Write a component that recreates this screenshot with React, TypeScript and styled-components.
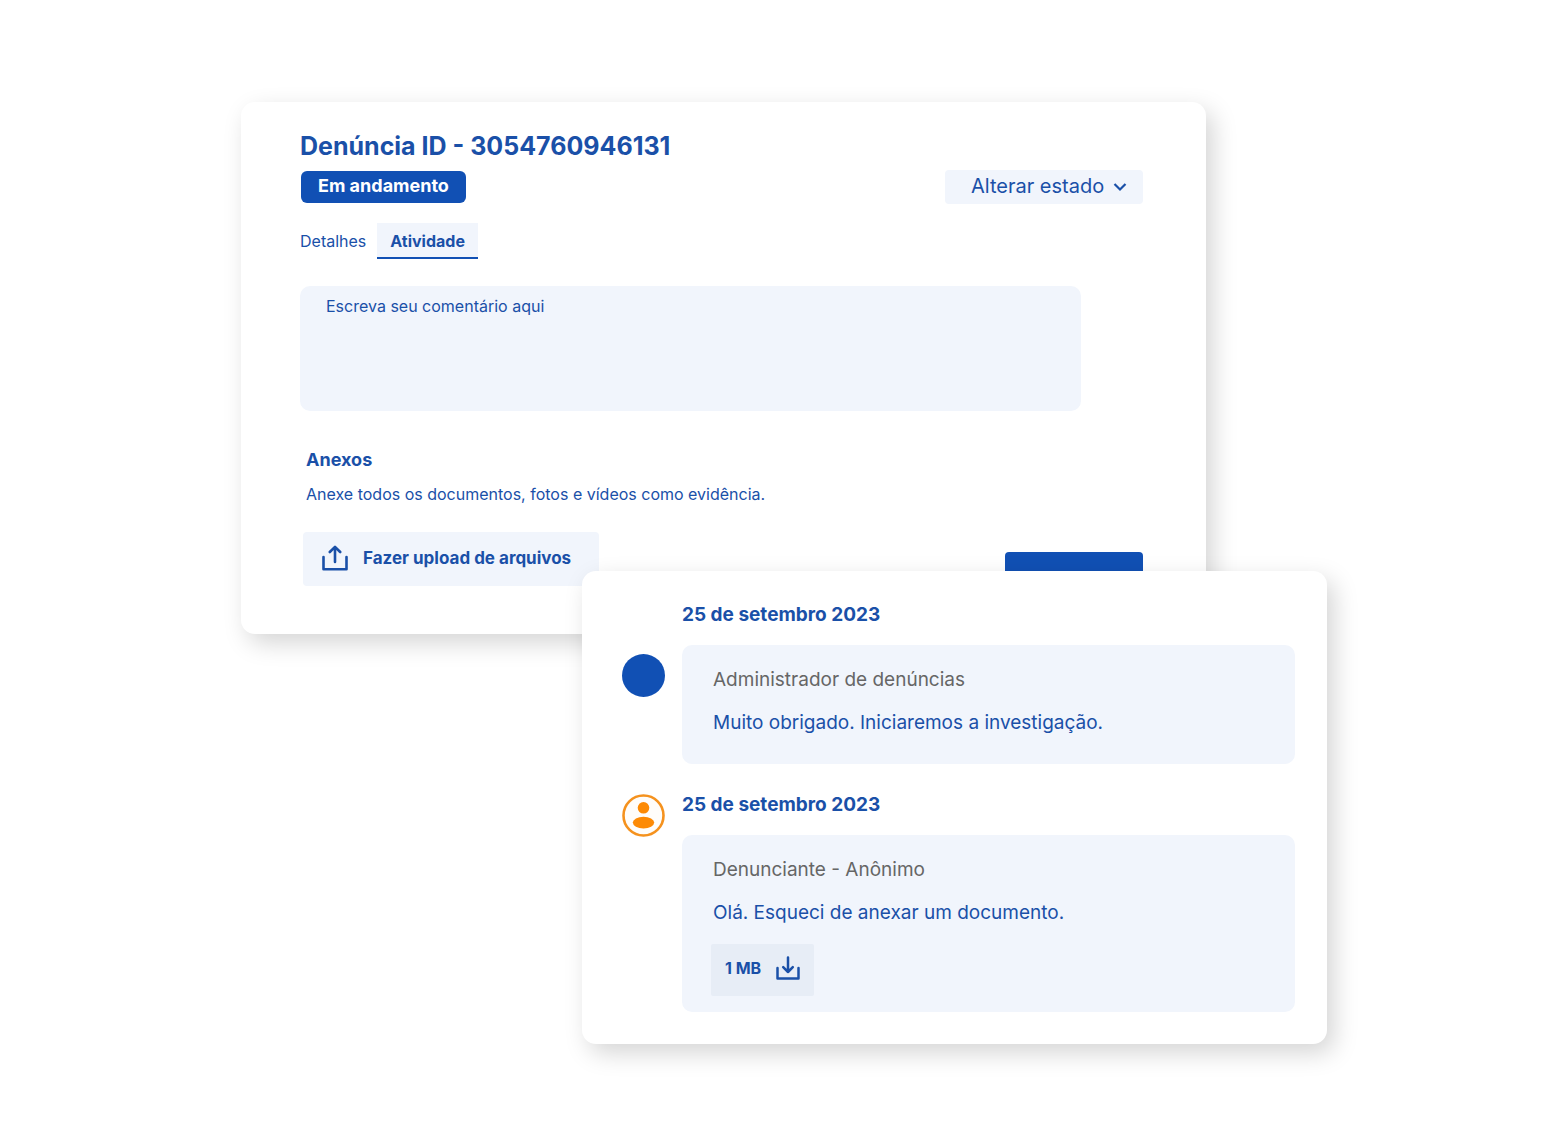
import React from "react";
import styled, { createGlobalStyle } from "styled-components";

const blue = "#1150b4";
const ink = "#1a50a8";
const mist = "#f1f5fc";

const GlobalStyle = createGlobalStyle`
  *, *::before, *::after { box-sizing: border-box; }
  body {
    margin: 0;
    background: #fff;
    color: ${ink};
    font-family: Inter, "Liberation Sans", sans-serif;
    font-size: 16px;
    line-height: 24px;
  }
  button, select, textarea { font: inherit; color: inherit; border: 0; margin: 0; }
  h1, h2, p { margin: 0; }
`;

const Page = styled.main`
  min-height: 100vh;
  display: flex;
  align-items: center;
  justify-content: center;
  padding: 32px;
`;

const Stage = styled.div`
  width: 100%;
  max-width: 1086px;
  display: flex;
  flex-direction: column;
`;

const Card = styled.section`
  background: #fff;
  border-radius: 14px;
  box-shadow: 7px 9px 24px rgba(0, 0, 0, 0.17);
`;

const ReportCard = styled(Card)`
  margin-right: 121px;
  padding: 28px 63px 28px 59px;
`;

const Title = styled.h1`
  font-size: 25px;
  line-height: 32px;
  font-weight: 700;
`;

const StatusRow = styled.div`
  display: flex;
  align-items: center;
  justify-content: space-between;
  margin-top: 8px;
`;

const Badge = styled.span`
  display: inline-flex;
  height: 32px;
  margin-left: 1px;
  padding: 0 17px 2px;
  align-items: center;
  border-radius: 6px;
  background: ${blue};
  color: #fff;
  font-size: 18px;
  font-weight: 700;
`;

const SelectWrap = styled.label`
  display: grid;
  grid-template-columns: 1fr 40px;
  align-items: center;
  width: 198px;
  height: 34px;
  border-radius: 4px;
  background: ${mist};
  svg { grid-area: 1 / 2; pointer-events: none; margin-left: 10px; }
`;

const StateSelect = styled.select`
  grid-area: 1 / 1 / 2 / 3;
  appearance: none;
  height: 34px;
  padding: 0 0 2px 26px;
  background: transparent;
  font-size: 20px;
`;

const Tabs = styled.nav`
  display: flex;
  gap: 11px;
  margin-top: 19px;
`;

const Tab = styled.button<{ $active?: boolean }>`
  height: 36px;
  padding: ${(p) => (p.$active ? "2px 13px 0" : "0")};
  background: ${(p) => (p.$active ? mist : "transparent")};
  border-bottom: ${(p) => (p.$active ? `2px solid ${blue}` : "0")};
  font-weight: ${(p) => (p.$active ? 700 : 400)};
  cursor: pointer;
`;

const Comment = styled.textarea`
  display: block;
  width: calc(100% - 62px);
  height: 125px;
  margin-top: 27px;
  padding: 8px 26px;
  border-radius: 10px;
  background: ${mist};
  resize: none;
  &::placeholder { color: ${ink}; opacity: 1; }
`;

const Attachments = styled.div`
  margin-top: 37px;
  padding-left: 6px;
`;

const Subtitle = styled.h2`
  font-size: 18px;
  line-height: 24px;
  font-weight: 700;
`;

const Hint = styled.p`
  margin-top: 10px;
`;

const Actions = styled.div`
  display: flex;
  align-items: flex-start;
  justify-content: space-between;
  margin-top: 26px;
  padding-left: 3px;
`;

const UploadButton = styled.button`
  display: flex;
  align-items: center;
  gap: 15px;
  height: 54px;
  padding: 0 28px 2px 19px;
  border-radius: 4px;
  background: ${mist};
  font-size: 17px;
  font-weight: 700;
  cursor: pointer;
`;

const SendButton = styled.button`
  width: 138px;
  height: 54px;
  margin-top: 20px;
  border-radius: 4px;
  background: ${blue};
  cursor: pointer;
`;

const ActivityCard = styled(Card)`
  position: relative;
  margin: -63px 0 0 341px;
  padding: 31px 32px 32px 40px;
  display: flex;
  flex-direction: column;
  gap: 28px;
`;

const Entry = styled.article`
  display: grid;
  grid-template-columns: 43px 1fr;
  column-gap: 17px;
`;

const AvatarSlot = styled.div<{ $drop: number }>`
  height: 43px;
  margin-top: ${(p) => p.$drop}px;
`;

const EntryDate = styled.h2`
  font-size: 19px;
  line-height: 26px;
  font-weight: 700;
`;

const Bubble = styled.div`
  margin-top: 17px;
  padding: 21px 31px 16px;
  border-radius: 10px;
  background: ${mist};
`;

const Author = styled.p`
  font-size: 19px;
  line-height: 28px;
  color: #666;
`;

const Message = styled.p`
  margin-top: 15px;
  padding-bottom: 11px;
  font-size: 19px;
  line-height: 28px;
`;

const FileButton = styled.button`
  display: flex;
  align-items: center;
  gap: 15px;
  height: 52px;
  margin: 6px 0 0 -2px;
  padding: 0 14px 4px;
  border-radius: 2px;
  background: #e7edf6;
  font-weight: 700;
  cursor: pointer;
`;

const Chevron = () => (
  <svg width="14" height="10" viewBox="0 0 14 10" fill="none" stroke={ink} strokeWidth="2.2" aria-hidden>
    <path d="M1.5 2 7 7.5 12.5 2" />
  </svg>
);

const UploadIcon = () => (
  <svg width="26" height="26" viewBox="0 0 26 26" fill="none" stroke={ink} strokeWidth="2.6" strokeLinejoin="round" strokeLinecap="round" aria-hidden>
    <path d="M1.5 12V24.3h23V12M13 17V2M7.8 7 13 1.8 18.2 7" />
  </svg>
);

const DownloadIcon = () => (
  <svg width="24" height="24" viewBox="0 0 24 24" fill="none" stroke={ink} strokeWidth="2.5" strokeLinejoin="round" strokeLinecap="round" aria-hidden>
    <path d="M1.5 12v10.5h21V12M12 1.6V16M7.2 11.2 12 16l4.8-4.8" />
  </svg>
);

const AdminAvatar = () => (
  <svg width="43" height="43" viewBox="0 0 43 43" aria-hidden>
    <circle cx="21.5" cy="21.5" r="21.5" fill={blue} />
  </svg>
);

const PersonAvatar = () => (
  <svg width="43" height="43" viewBox="0 0 43 43" aria-hidden>
    <circle cx="21.5" cy="21.5" r="20" fill="#fffdfa" stroke="#f5921e" strokeWidth="2.6" />
    <circle cx="21.5" cy="13.8" r="5.8" fill="#fd8a04" />
    <ellipse cx="21.5" cy="28.6" rx="10.7" ry="5.8" fill="#fd8a04" />
  </svg>
);

export default function App() {
  return (
    <>
      <GlobalStyle />
      <Page>
        <Stage>
          <ReportCard>
            <Title>Denúncia ID - 3054760946131</Title>
            <StatusRow>
              <Badge>Em andamento</Badge>
              <SelectWrap>
                <StateSelect aria-label="Alterar estado" defaultValue="change">
                  <option value="change">Alterar estado</option>
                </StateSelect>
                <Chevron />
              </SelectWrap>
            </StatusRow>
            <Tabs>
              <Tab type="button">Detalhes</Tab>
              <Tab type="button" $active>Atividade</Tab>
            </Tabs>
            <Comment aria-label="Comentário" placeholder="Escreva seu comentário aqui" />
            <Attachments>
              <Subtitle>Anexos</Subtitle>
              <Hint>Anexe todos os documentos, fotos e vídeos como evidência.</Hint>
            </Attachments>
            <Actions>
              <UploadButton type="button">
                <UploadIcon />
                Fazer upload de arquivos
              </UploadButton>
              <SendButton type="button" aria-label="Enviar" />
            </Actions>
          </ReportCard>
          <ActivityCard>
            <Entry>
              <AvatarSlot $drop={52}><AdminAvatar /></AvatarSlot>
              <div>
                <EntryDate>25 de setembro 2023</EntryDate>
                <Bubble>
                  <Author>Administrador de denúncias</Author>
                  <Message>Muito obrigado. Iniciaremos a investigação.</Message>
                </Bubble>
              </div>
            </Entry>
            <Entry>
              <AvatarSlot $drop={2}><PersonAvatar /></AvatarSlot>
              <div>
                <EntryDate>25 de setembro 2023</EntryDate>
                <Bubble>
                  <Author>Denunciante - Anônimo</Author>
                  <Message>Olá. Esqueci de anexar um documento.</Message>
                  <FileButton type="button">
                    1 MB
                    <DownloadIcon />
                  </FileButton>
                </Bubble>
              </div>
            </Entry>
          </ActivityCard>
        </Stage>
      </Page>
    </>
  );
}
